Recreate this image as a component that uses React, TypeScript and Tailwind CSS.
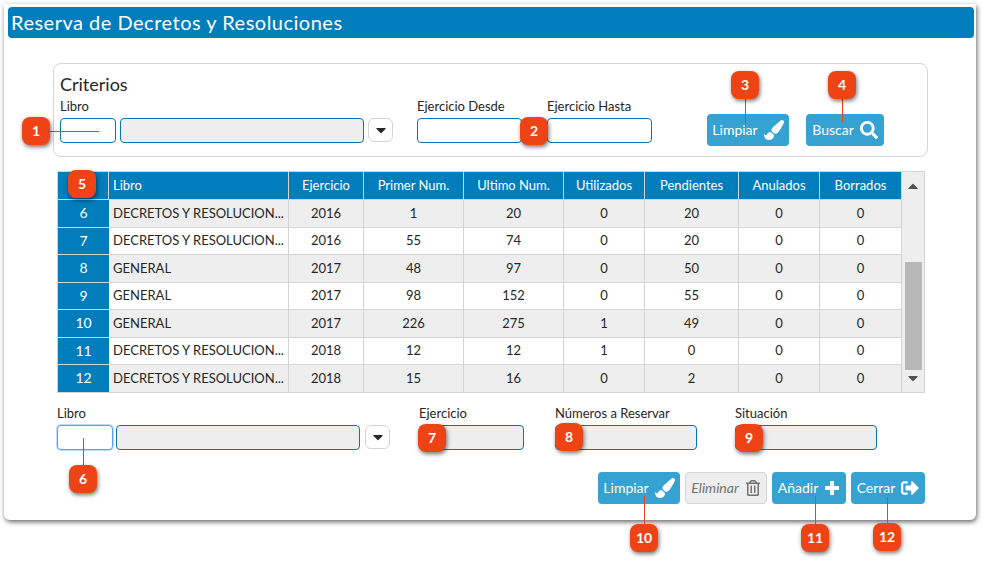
import { FaPaintBrush, FaSearch, FaRegTrashAlt, FaSignOutAlt, FaCaretDown, FaCaretUp } from 'react-icons/fa'
import type { ReactNode } from 'react'

const DEC = 'DECRETOS Y RESOLUCION...'

const columns = ['Ejercicio', 'Primer Num.', 'Ultimo Num.', 'Utilizados', 'Pendientes', 'Anulados', 'Borrados']

const rows = [
  [6, DEC, 2016, 1, 20, 0, 20, 0, 0],
  [7, DEC, 2016, 55, 74, 0, 20, 0, 0],
  [8, 'GENERAL', 2017, 48, 97, 0, 50, 0, 0],
  [9, 'GENERAL', 2017, 98, 152, 0, 55, 0, 0],
  [10, 'GENERAL', 2017, 226, 275, 1, 49, 0, 0],
  [11, DEC, 2018, 12, 12, 1, 0, 0, 0],
  [12, DEC, 2018, 15, 16, 0, 2, 0, 0],
]

const callouts = [
  { n: 1, x: 36, y: 131 },
  { n: 2, x: 534, y: 131 },
  { n: 3, x: 745, y: 85 },
  { n: 4, x: 842, y: 85 },
  { n: 5, x: 82, y: 184 },
  { n: 6, x: 83, y: 479 },
  { n: 7, x: 432, y: 438 },
  { n: 8, x: 569, y: 437 },
  { n: 9, x: 749, y: 438 },
  { n: 10, x: 644, y: 538 },
  { n: 11, x: 815, y: 538 },
  { n: 12, x: 887, y: 537 },
]

// leader lines: x, y, width, height
const lines = [
  [50, 131, 49, 1],
  [745, 99, 1, 28],
  [842, 99, 1, 23],
  [83, 438, 1, 28],
  [644, 496, 1, 28],
  [815, 496, 1, 28],
  [887, 497, 1, 27],
]

function Field({ className, gray, focus }: { className: string; gray?: boolean; focus?: boolean }) {
  return (
    <div
      className={`h-[25px] rounded-sm border ${focus ? 'border-blue-400 ring-1 ring-blue-200' : 'border-[#0a75ad]'} ${gray ? 'bg-[#eeeeee]' : 'bg-white'} ${className}`}
    />
  )
}

function Combo() {
  return (
    <button className="flex h-6 w-[25px] items-center justify-center rounded-md border border-neutral-300 bg-white text-neutral-800">
      <FaCaretDown className="size-4" />
    </button>
  )
}

function Btn({ label, icon, className }: { label: string; icon: ReactNode; className: string }) {
  return (
    <button className={`flex h-8 items-center justify-center gap-1.5 rounded bg-[#35a2d2] text-sm text-white ${className}`}>
      {label}
      {icon}
    </button>
  )
}

function PlusIcon() {
  return (
    <svg viewBox="0 0 16 16" className="size-4 fill-current">
      <path d="M6 1h4v5h5v4h-5v5H6v-5H1V6h5z" />
    </svg>
  )
}

export default function App() {
  return (
    <div className="relative h-[563px] w-[985px] overflow-hidden bg-white font-['Lato',sans-serif] text-[13px] text-neutral-800">
      <div className="ml-1 mt-1 h-[516px] w-[972px] rounded-b-md bg-white pt-[3px] shadow-[1px_2px_5px_rgba(0,0,0,0.6)]">
        <div className="ml-1 mr-0.5 flex h-[31px] items-center rounded-sm bg-[#007dbb] px-[3px] pb-0.5 text-xl tracking-wide text-white">
          Reserva de Decretos y Resoluciones
        </div>

        <div className="ml-[49px] mr-12 mt-[25px] flex h-[94px] rounded-lg border border-neutral-300 px-1.5 pt-2.5">
          <div className="w-[357px]">
            <div className="text-lg leading-5">Criterios</div>
            <div className="mb-1 mt-1 leading-4">Libro</div>
            <div className="flex items-start gap-1">
              <Field className="w-14" />
              <Field className="w-61" gray />
              <Combo />
            </div>
          </div>
          <div className="mt-6 w-[105px]">
            <div className="mb-1 leading-4">Ejercicio Desde</div>
            <Field className="w-full" />
          </div>
          <div className="ml-[25px] mt-6 w-[105px]">
            <div className="mb-1 leading-4">Ejercicio Hasta</div>
            <Field className="w-full" />
          </div>
          <Btn label="Limpiar" icon={<FaPaintBrush className="size-5" />} className="ml-[55px] mt-10 w-[82px]" />
          <Btn label="Buscar" icon={<FaSearch className="size-4.5" />} className="ml-[17px] mt-10 w-[78px]" />
        </div>

        <div className="ml-[53px] mr-[51px] mt-3.5 flex border border-neutral-300">
          <div className="flex-1">
            <div className="grid h-[27px] grid-cols-[51px_180px_75px_100px_100px_81px_94px_81px_82px] bg-[#007dbb] text-white">
              <div className="border-r border-neutral-300" />
              <div className="flex items-center border-r border-neutral-300 pl-1">Libro</div>
              {columns.map((c) => (
                <div key={c} className="flex items-center justify-center border-r border-neutral-300">
                  {c}
                </div>
              ))}
            </div>
            {rows.map((r, i) => (
              <div
                key={r[0]}
                className={`grid h-[27.5px] grid-cols-[51px_180px_75px_100px_100px_81px_94px_81px_82px] border-t border-neutral-300 ${i % 2 === 0 ? 'bg-[#eeeeee]' : 'bg-white'}`}
              >
                <div className="flex items-center justify-center bg-[#007dbb] text-sm text-white">{r[0]}</div>
                <div className="flex items-center border-r border-neutral-300 pl-1">{r[1]}</div>
                {r.slice(2).map((v, j) => (
                  <div key={j} className="flex items-center justify-center border-r border-neutral-300">
                    {v}
                  </div>
                ))}
              </div>
            ))}
          </div>
          <div className="flex w-6 flex-col items-center bg-[#eeeeee] text-neutral-600">
            <FaCaretUp className="mt-1.5 size-4" />
            <div className="mt-auto h-[108px] w-[17px] bg-neutral-400/70" />
            <FaCaretDown className="mb-1.5 size-4" />
          </div>
        </div>

        <div className="ml-[53px] mt-3 flex">
          <div className="w-[334px]">
            <div className="mb-1 leading-4">Libro</div>
            <div className="flex items-start gap-[3px]">
              <Field className="w-14" focus />
              <Field className="w-61" gray />
              <div className="ml-0.5">
                <Combo />
              </div>
            </div>
          </div>
          <div className="ml-7 w-[105px]">
            <div className="mb-1 leading-4">Ejercicio</div>
            <Field className="w-full" gray />
          </div>
          <div className="ml-[31px] w-[142px]">
            <div className="mb-1 leading-4">Números a Reservar</div>
            <Field className="w-full" gray />
          </div>
          <div className="ml-[38px] w-[142px]">
            <div className="mb-1 leading-4">Situación</div>
            <Field className="w-full" gray />
          </div>
        </div>

        <div className="ml-[594px] mt-5.5 flex gap-[5px]">
          <Btn label="Limpiar" icon={<FaPaintBrush className="size-5" />} className="w-[82px]" />
          <button className="flex h-8 w-[82px] items-center justify-center gap-1.5 rounded border border-neutral-300 bg-[#eeeeee] text-sm italic text-neutral-500">
            Eliminar
            <FaRegTrashAlt className="size-4" />
          </button>
          <Btn label="Añadir" icon={<PlusIcon />} className="w-[74px]" />
          <Btn label="Cerrar" icon={<FaSignOutAlt className="size-4.5" />} className="w-[74px]" />
        </div>
      </div>

      {lines.map(([x, y, w, h]) => (
        <div key={`${x}-${y}`} className="absolute bg-[#e8431a]" style={{ left: x, top: y, width: w, height: h }} />
      ))}
      {callouts.map((c) => (
        <div
          key={c.n}
          className="absolute flex size-7 items-center justify-center rounded-lg bg-[#ee4314] text-sm font-bold text-white shadow-[1px_2px_4px_rgba(0,0,0,0.55)]"
          style={{ left: c.x - 14, top: c.y - 14 }}
        >
          {c.n}
        </div>
      ))}
    </div>
  )
}
